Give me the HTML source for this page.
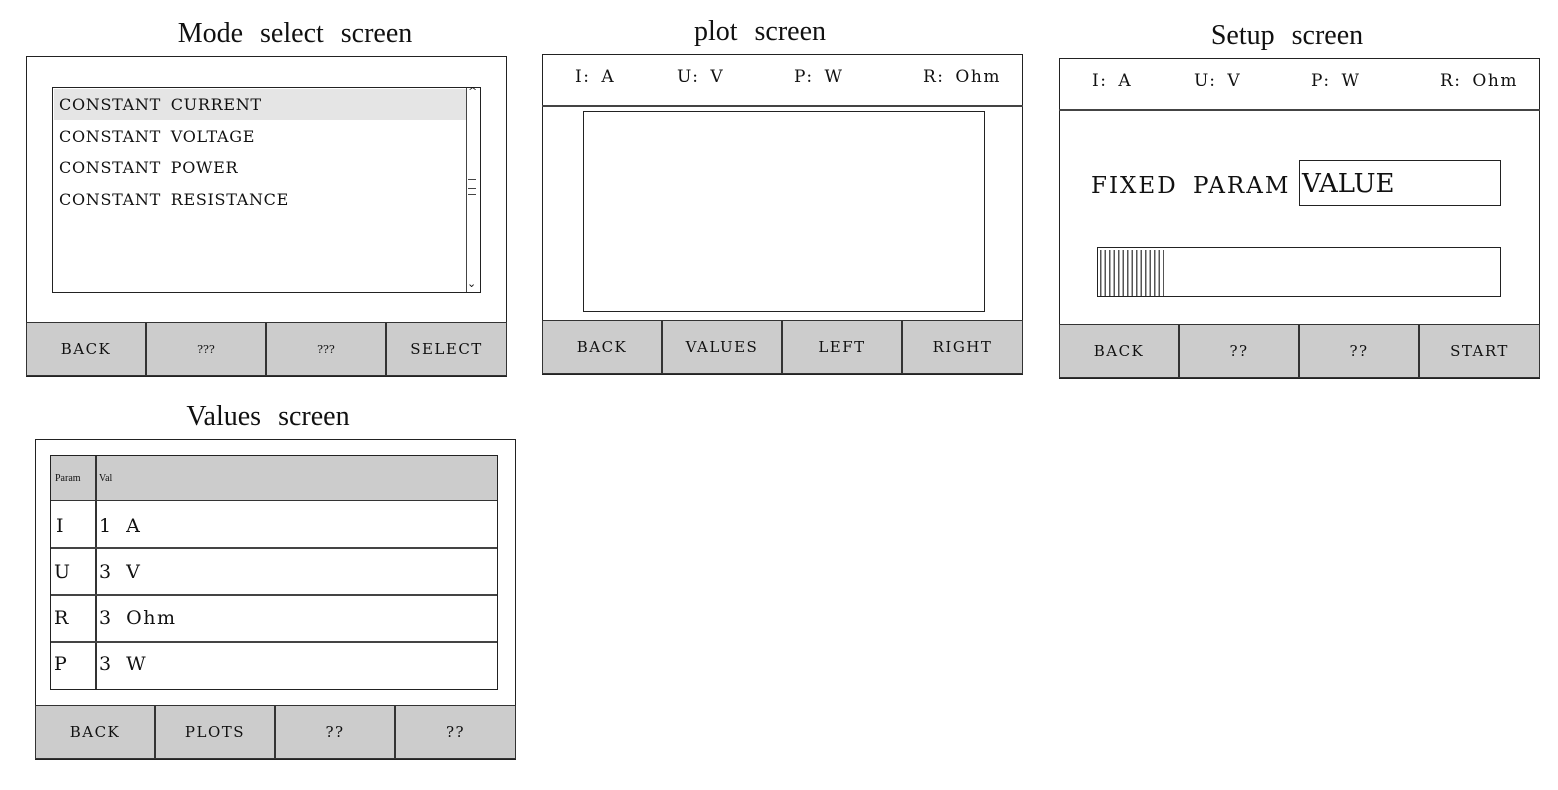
<!DOCTYPE html>
<html><head><style>
*{margin:0;padding:0;box-sizing:border-box}
body{width:1558px;height:790px;background:#fff;position:relative;overflow:hidden;font-family:"DejaVu Serif","Liberation Serif",serif;color:#111}
.a{position:absolute}
.box{position:absolute;border:1.5px solid #222;background:#fff}
.t{position:absolute;font-family:"Liberation Serif",serif;font-size:28px;word-spacing:10px;white-space:nowrap;transform:translateX(-50%)}
.s{position:absolute;white-space:nowrap;letter-spacing:1.5px;word-spacing:4px}
.btn{position:absolute;background:#ccc;border:1.5px solid #333;font-size:15px;letter-spacing:1.5px;display:flex;align-items:center;justify-content:center;height:54px;width:120px}
.line{position:absolute;height:1.5px;background:#444}
</style></head><body>

<div class="t" style="left:295px;top:18px">Mode select screen</div>
<div class="box" style="left:26px;top:56px;width:481px;height:321px"></div>
<div class="box" style="left:52px;top:87px;width:429px;height:206px"></div>
<div class="a" style="left:54px;top:89px;width:412px;height:31px;background:#e5e5e5"></div>
<div class="a" style="left:466px;top:88px;width:1px;height:204px;background:#444"></div>
<div class="a" style="left:468px;top:85px;font-size:11px">^</div>
<div class="a" style="left:467px;top:277px;font-size:11px">&#8964;</div>
<div class="a" style="left:468px;top:179px;width:8px;border-top:1px solid #444;height:10px;border-bottom:1px solid #444"></div>
<div class="a" style="left:468px;top:194px;width:8px;height:1px;background:#444"></div>
<div class="s" style="left:59px;top:95px;font-size:16px;letter-spacing:0.7px">CONSTANT CURRENT</div>
<div class="s" style="left:59px;top:127px;font-size:16px;letter-spacing:0.7px">CONSTANT VOLTAGE</div>
<div class="s" style="left:59px;top:158px;font-size:16px;letter-spacing:0.7px">CONSTANT POWER</div>
<div class="s" style="left:59px;top:190px;font-size:16px;letter-spacing:0.7px">CONSTANT RESISTANCE</div>
<div class="btn" style="left:26px;top:322px">BACK</div>
<div class="btn" style="left:146px;top:322px;font-size:11px;letter-spacing:0">???</div>
<div class="btn" style="left:266px;top:322px;font-size:11px;letter-spacing:0">???</div>
<div class="btn" style="left:386px;top:322px;width:121px">SELECT</div>

<div class="t" style="left:760px;top:16px">plot screen</div>
<div class="box" style="left:542px;top:54px;width:481px;height:321px"></div>
<div class="line" style="left:542px;top:105px;width:481px"></div>
<div class="s" style="left:575px;top:67px;font-size:17px">I: A</div>
<div class="s" style="left:677px;top:67px;font-size:17px">U: V</div>
<div class="s" style="left:794px;top:67px;font-size:17px">P: W</div>
<div class="s" style="left:923px;top:67px;font-size:17px">R: Ohm</div>
<div class="box" style="left:583px;top:111px;width:402px;height:201px"></div>
<div class="btn" style="left:542px;top:320px">BACK</div>
<div class="btn" style="left:662px;top:320px">VALUES</div>
<div class="btn" style="left:782px;top:320px">LEFT</div>
<div class="btn" style="left:902px;top:320px;width:121px">RIGHT</div>

<div class="t" style="left:1287px;top:20px">Setup screen</div>
<div class="box" style="left:1059px;top:58px;width:481px;height:321px"></div>
<div class="line" style="left:1059px;top:109px;width:481px"></div>
<div class="s" style="left:1092px;top:71px;font-size:17px">I: A</div>
<div class="s" style="left:1194px;top:71px;font-size:17px">U: V</div>
<div class="s" style="left:1311px;top:71px;font-size:17px">P: W</div>
<div class="s" style="left:1440px;top:71px;font-size:17px">R: Ohm</div>
<div class="s" style="left:1091px;top:173px;font-size:23px;letter-spacing:2px;word-spacing:6px">FIXED PARAM</div>
<div class="box" style="left:1299px;top:160px;width:202px;height:46px"></div>
<div class="s" style="left:1302px;top:169px;font-size:26px;letter-spacing:0">VALUE</div>
<div class="box" style="left:1097px;top:247px;width:404px;height:50px;background:repeating-linear-gradient(90deg,#555 0 1.5px,#fff 1.5px 4.5px) 2px 2px/64px 46px no-repeat #fff"></div>
<div class="btn" style="left:1059px;top:324px">BACK</div>
<div class="btn" style="left:1179px;top:324px">??</div>
<div class="btn" style="left:1299px;top:324px">??</div>
<div class="btn" style="left:1419px;top:324px;width:121px">START</div>

<div class="t" style="left:268px;top:401px">Values screen</div>
<div class="box" style="left:35px;top:439px;width:481px;height:321px"></div>
<div class="box" style="left:50px;top:455px;width:448px;height:235px"></div>
<div class="a" style="left:51px;top:456px;width:446px;height:45px;background:#ccc;border-bottom:1.5px solid #333"></div>
<div class="a" style="left:95px;top:456px;width:1.5px;height:233px;background:#333"></div>
<div class="line" style="left:51px;top:547px;width:446px"></div>
<div class="line" style="left:51px;top:594px;width:446px"></div>
<div class="line" style="left:51px;top:641px;width:446px"></div>
<div class="a" style="left:55px;top:473px;font-size:10px;font-family:'Liberation Serif',serif">Param</div>
<div class="a" style="left:99px;top:473px;font-size:10px;font-family:'Liberation Serif',serif">Val</div>
<div class="s" style="left:56px;top:515px;font-size:19px">I</div>
<div class="s" style="left:54px;top:561px;font-size:19px">U</div>
<div class="s" style="left:54px;top:607px;font-size:19px">R</div>
<div class="s" style="left:54px;top:653px;font-size:19px">P</div>
<div class="s" style="left:99px;top:515px;font-size:19px;word-spacing:6px">1 A</div>
<div class="s" style="left:99px;top:561px;font-size:19px;word-spacing:6px">3 V</div>
<div class="s" style="left:99px;top:607px;font-size:19px;word-spacing:6px">3 Ohm</div>
<div class="s" style="left:99px;top:653px;font-size:19px;word-spacing:6px">3 W</div>
<div class="btn" style="left:35px;top:705px">BACK</div>
<div class="btn" style="left:155px;top:705px">PLOTS</div>
<div class="btn" style="left:275px;top:705px">??</div>
<div class="btn" style="left:395px;top:705px;width:121px">??</div>
</body></html>
